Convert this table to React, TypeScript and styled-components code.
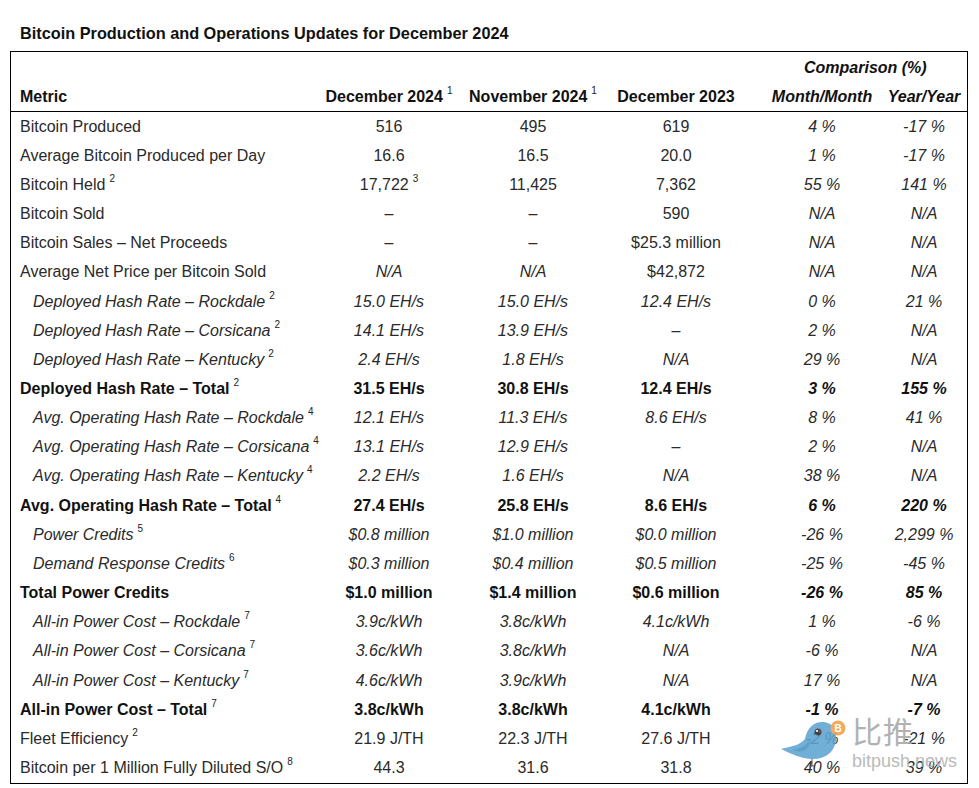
import React from "react";
import styled, { createGlobalStyle } from "styled-components";

const GlobalStyle = createGlobalStyle`
  html, body { margin: 0; padding: 0; background: #ffffff; }
  body { font-family: "Liberation Sans", Arial, sans-serif; color: #1c1c1c; }
`;

type Kind = "plain" | "sub" | "total";
type Val = string | { t: string; sup: string };
interface RowData {
  label: string;
  sup?: string;
  kind: Kind;
  v: Val[];
}

const D = "\u2013";

const rows: RowData[] = [
  { label: "Bitcoin Produced", kind: "plain", v: ["516", "495", "619", "4 %", "-17 %"] },
  { label: "Average Bitcoin Produced per Day", kind: "plain", v: ["16.6", "16.5", "20.0", "1 %", "-17 %"] },
  { label: "Bitcoin Held", sup: "2", kind: "plain", v: [{ t: "17,722", sup: "3" }, "11,425", "7,362", "55 %", "141 %"] },
  { label: "Bitcoin Sold", kind: "plain", v: [D, D, "590", "N/A", "N/A"] },
  { label: `Bitcoin Sales ${D} Net Proceeds`, kind: "plain", v: [D, D, "$25.3 million", "N/A", "N/A"] },
  { label: "Average Net Price per Bitcoin Sold", kind: "plain", v: ["N/A", "N/A", "$42,872", "N/A", "N/A"] },
  { label: `Deployed Hash Rate ${D} Rockdale`, sup: "2", kind: "sub", v: ["15.0 EH/s", "15.0 EH/s", "12.4 EH/s", "0 %", "21 %"] },
  { label: `Deployed Hash Rate ${D} Corsicana`, sup: "2", kind: "sub", v: ["14.1 EH/s", "13.9 EH/s", D, "2 %", "N/A"] },
  { label: `Deployed Hash Rate ${D} Kentucky`, sup: "2", kind: "sub", v: ["2.4 EH/s", "1.8 EH/s", "N/A", "29 %", "N/A"] },
  { label: `Deployed Hash Rate ${D} Total`, sup: "2", kind: "total", v: ["31.5 EH/s", "30.8 EH/s", "12.4 EH/s", "3 %", "155 %"] },
  { label: `Avg. Operating Hash Rate ${D} Rockdale`, sup: "4", kind: "sub", v: ["12.1 EH/s", "11.3 EH/s", "8.6 EH/s", "8 %", "41 %"] },
  { label: `Avg. Operating Hash Rate ${D} Corsicana`, sup: "4", kind: "sub", v: ["13.1 EH/s", "12.9 EH/s", D, "2 %", "N/A"] },
  { label: `Avg. Operating Hash Rate ${D} Kentucky`, sup: "4", kind: "sub", v: ["2.2 EH/s", "1.6 EH/s", "N/A", "38 %", "N/A"] },
  { label: `Avg. Operating Hash Rate ${D} Total`, sup: "4", kind: "total", v: ["27.4 EH/s", "25.8 EH/s", "8.6 EH/s", "6 %", "220 %"] },
  { label: "Power Credits", sup: "5", kind: "sub", v: ["$0.8 million", "$1.0 million", "$0.0 million", "-26 %", "2,299 %"] },
  { label: "Demand Response Credits", sup: "6", kind: "sub", v: ["$0.3 million", "$0.4 million", "$0.5 million", "-25 %", "-45 %"] },
  { label: "Total Power Credits", kind: "total", v: ["$1.0 million", "$1.4 million", "$0.6 million", "-26 %", "85 %"] },
  { label: `All-in Power Cost ${D} Rockdale`, sup: "7", kind: "sub", v: ["3.9c/kWh", "3.8c/kWh", "4.1c/kWh", "1 %", "-6 %"] },
  { label: `All-in Power Cost ${D} Corsicana`, sup: "7", kind: "sub", v: ["3.6c/kWh", "3.8c/kWh", "N/A", "-6 %", "N/A"] },
  { label: `All-in Power Cost ${D} Kentucky`, sup: "7", kind: "sub", v: ["4.6c/kWh", "3.9c/kWh", "N/A", "17 %", "N/A"] },
  { label: `All-in Power Cost ${D} Total`, sup: "7", kind: "total", v: ["3.8c/kWh", "3.8c/kWh", "4.1c/kWh", "-1 %", "-7 %"] },
  { label: "Fleet Efficiency", sup: "2", kind: "plain", v: ["21.9 J/TH", "22.3 J/TH", "27.6 J/TH", "-2 %", "-21 %"] },
  { label: "Bitcoin per 1 Million Fully Diluted S/O", sup: "8", kind: "plain", v: ["44.3", "31.6", "31.8", "40 %", "39 %"] },
];

const COLS = "305px 146px 142px 144px 148px 56px 1fr";

const Page = styled.div`
  position: relative;
  width: 979px;
  height: 788px;
  overflow: hidden;
`;

const Title = styled.h1`
  box-sizing: border-box;
  height: 51px;
  margin: 0;
  padding: 24px 0 0 20px;
  font-size: 16.3px;
  line-height: 19px;
  font-weight: 700;
  color: #111;
  white-space: nowrap;
`;

const Table = styled.div`
  box-sizing: border-box;
  margin-left: 10px;
  width: 958px;
  border: 1px solid #000;
`;

const Head = styled.div`
  height: 59px;
  border-bottom: 1px solid #000;
  display: grid;
  grid-template-columns: ${COLS};
  grid-template-rows: 31px 28px;
`;

const GroupHead = styled.div`
  grid-column: 5 / span 3;
  grid-row: 1;
  display: flex;
  align-items: center;
  justify-content: flex-start;
  padding-left: 56px;
  font-size: 16px;
  font-weight: 700;
  font-style: italic;
  color: #111;
  white-space: nowrap;
`;

const HeadCell = styled.div<{ $left?: boolean; $italic?: boolean }>`
  grid-row: 2;
  display: flex;
  align-items: center;
  justify-content: ${(p) => (p.$left ? "flex-start" : "center")};
  padding-left: ${(p) => (p.$left ? "9px" : "0")};
  font-size: 16px;
  font-weight: 700;
  font-style: ${(p) => (p.$italic ? "italic" : "normal")};
  color: #111;
  white-space: nowrap;
  min-width: 0;
`;

const BodyRow = styled.div`
  display: grid;
  grid-template-columns: ${COLS};
  height: 29.17px;
`;

const LabelCell = styled.div<{ $kind: Kind }>`
  display: flex;
  align-items: center;
  padding-left: ${(p) => (p.$kind === "sub" ? "22px" : "9px")};
  font-size: 16px;
  font-weight: ${(p) => (p.$kind === "total" ? 700 : 400)};
  font-style: ${(p) => (p.$kind === "sub" ? "italic" : "normal")};
  color: ${(p) => (p.$kind === "total" ? "#111" : "#2a2a2a")};
  white-space: nowrap;
`;

const ValueCell = styled.div<{ $bold: boolean; $italic: boolean }>`
  display: flex;
  align-items: center;
  justify-content: center;
  font-size: 16px;
  font-weight: ${(p) => (p.$bold ? 700 : 400)};
  font-style: ${(p) => (p.$italic ? "italic" : "normal")};
  color: ${(p) => (p.$bold ? "#111" : "#2a2a2a")};
  white-space: nowrap;
  min-width: 0;
`;

const Sup = styled.span`
  position: relative;
  top: -8px;
  margin-left: 4px;
  font-size: 10px;
  line-height: 0;
  font-weight: 400;
  font-style: normal;
  color: #222;
`;

const Watermark = styled.div`
  position: absolute;
  left: 780px;
  top: 712px;
  display: flex;
  align-items: flex-start;
  pointer-events: none;
`;

const BrandText = styled.div`
  display: flex;
  flex-direction: column;
  color: #a9a9a9;
  opacity: 0.9;
`;

const BrandCn = styled.span`
  font-family: "Noto Sans CJK SC", sans-serif;
  font-size: 30px;
  line-height: 36px;
  letter-spacing: 1px;
`;

const BrandEn = styled.span`
  font-family: "Liberation Sans", Arial, sans-serif;
  font-size: 18px;
  line-height: 20px;
  margin-top: 3px;
  color: #b3b3b3;
`;

const Bird = () => (
  <svg width="72" height="60" viewBox="0 0 72 60">
    <g opacity="0.88">
      <path
        d="M1,37 C12,34 19,34 25,27 C27,15 35,9 44,10 C53,11 57,19 56,29 C54,41 44,48 31,47 C20,46 11,42 1,37 Z"
        fill="#5ea4d1"
      />
      <path d="M12,38 C21,37 27,33 31,27 C30,37 23,42 12,38 Z" fill="#4a93c4" />
      <path d="M54,16 L61,19 L55,22 Z" fill="#f2c230" />
      <circle cx="38" cy="20" r="3.6" fill="#3b3b3b" />
      <circle cx="37" cy="19" r="1.1" fill="#ffffff" />
      <path d="M32,47 L32,54 M29,54 L35,54" stroke="#444" strokeWidth="1" fill="none" />
      <circle cx="58" cy="16" r="7.5" fill="#f0a04b" />
      <text x="58" y="19.5" textAnchor="middle" fontSize="10" fontWeight="700" fill="#ffffff" fontFamily="Liberation Sans, Arial, sans-serif">
        B
      </text>
    </g>
  </svg>
);

const renderVal = (v: Val) =>
  typeof v === "string" ? (
    <span>{v}</span>
  ) : (
    <span>
      {v.t}
      <Sup>{v.sup}</Sup>
    </span>
  );

export default function App() {
  return (
    <Page>
      <GlobalStyle />
      <Title>Bitcoin Production and Operations Updates for December 2024</Title>
      <Table>
        <Head>
          <GroupHead>Comparison (%)</GroupHead>
          <HeadCell $left>Metric</HeadCell>
          <HeadCell>
            <span>
              December 2024<Sup>1</Sup>
            </span>
          </HeadCell>
          <HeadCell>
            <span>
              November 2024<Sup>1</Sup>
            </span>
          </HeadCell>
          <HeadCell>December 2023</HeadCell>
          <HeadCell $italic>Month/Month</HeadCell>
          <HeadCell $italic>Year/Year</HeadCell>
        </Head>
        {rows.map((r) => (
          <BodyRow key={r.label}>
            <LabelCell $kind={r.kind}>
              <span>
                {r.label}
                {r.sup && <Sup>{r.sup}</Sup>}
              </span>
            </LabelCell>
            {r.v.map((v, i) => {
              const text = typeof v === "string" ? v : v.t;
              const italic = i >= 3 || r.kind === "sub" || text === "N/A";
              return (
                <ValueCell key={i} $bold={r.kind === "total"} $italic={italic}>
                  {renderVal(v)}
                </ValueCell>
              );
            })}
          </BodyRow>
        ))}
      </Table>
      <Watermark>
        <Bird />
        <BrandText>
          <BrandCn>比推</BrandCn>
          <BrandEn>bitpush.news</BrandEn>
        </BrandText>
      </Watermark>
    </Page>
  );
}
